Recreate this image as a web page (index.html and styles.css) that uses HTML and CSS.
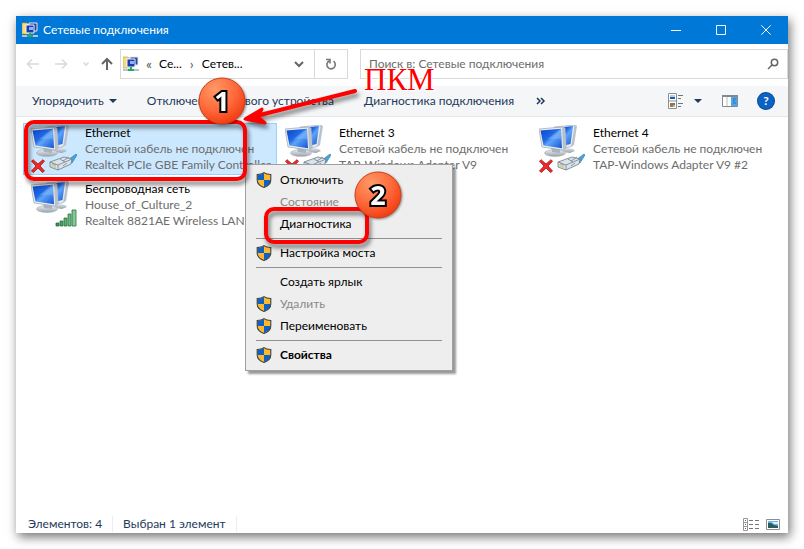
FILE: index.html
```html
<!DOCTYPE html>
<html lang="ru">
<head>
<meta charset="utf-8">
<title>Сетевые подключения</title>
<link rel="stylesheet" href="styles.css">
</head>
<body>
<svg class="defs" aria-hidden="true">
  <defs>
    <linearGradient id="screen" x1="0" y1="0" x2="1" y2="1"><stop offset="0" stop-color="#0a48c8"/><stop offset=".4" stop-color="#1f66e6"/><stop offset=".55" stop-color="#5ea4f8"/><stop offset="1" stop-color="#1553d6"/></linearGradient>
    <linearGradient id="metal" x1="0" y1="0" x2="0" y2="1"><stop offset="0" stop-color="#eef1f4"/><stop offset="1" stop-color="#98a2ac"/></linearGradient>
    <linearGradient id="bar" x1="0" y1="0" x2="1" y2="0"><stop offset="0" stop-color="#2f8a50"/><stop offset="1" stop-color="#8fd0a0"/></linearGradient>
    <radialGradient id="ball" cx=".35" cy=".25" r=".8"><stop offset="0" stop-color="#ff9a66"/><stop offset=".55" stop-color="#ff6a3c"/><stop offset="1" stop-color="#f03a10"/></radialGradient>
  </defs>
  <symbol id="i-net" viewBox="0 0 16 16">
    <path d="M0 1h5l1 1h3v10H0z" fill="#f5dc80" stroke="#b99a3c" stroke-width=".6"/>
    <path d="M7 1h8v8H7z" fill="#2546a8" stroke="#e9e9e9"/>
    <path d="M4 3h8v8H4z" fill="#1b3bb4" stroke="#f3f3f3"/>
    <path d="M7 5h4v3H7z" fill="#8fb4f5"/>
    <path d="M7 11h2v2h2v2H5v-2h2z" fill="#1fae62"/>
    <path d="M0 13h5v2H0zM11 13h5v2h-5z" fill="#b9c4c8"/>
  </symbol>
  <symbol id="i-pcs" viewBox="0 0 38 32">
    <path d="M24 22l10 2 2 2-5 2-7-1z" fill="url(#metal)"/>
    <path d="M15 2l21-2-2 20-3 2-9 1z" fill="#e6ebf0" stroke="#a4afb9" stroke-width=".7"/>
    <path d="M36 0l2 1-3 19-3 2z" fill="#b9c3cc"/>
    <path d="M17 3l17-2-2.500 18L23 21z" fill="url(#screen)"/>
    <ellipse cx="16" cy="28" rx="10.500" ry="3.400" fill="url(#metal)" stroke="#a6afb6" stroke-width=".6"/>
    <path d="M12 22l9 1v5l-8-1z" fill="#aab4bd"/>
    <path d="M0 4l23-2 3 1 1 20-3 2L3 22z" fill="#e9edf2" stroke="#9aa5af" stroke-width=".7"/>
    <path d="M23 2l3 1 1 20-3 2z" fill="#b7c1cb"/>
    <path d="M1.500 5.500L22 3.700l1 19.500L4.500 20.500z" fill="url(#screen)"/>
    <path d="M22 3.700l.6 10L9 14z" fill="#8fc1fa" opacity=".4"/>
  </symbol>
  <symbol id="i-x" viewBox="0 0 14 14">
    <path d="M2 .7L7 5l5-4.300 1.500 1.500L9 7l4.500 5-2 1.500L7 9l-4.500 4.500L.5 12 5 7 .5 2.200z" fill="#ee2b2b" stroke="#a90d0d" stroke-width=".8"/>
  </symbol>
  <symbol id="i-plug" viewBox="0 0 28 18">
    <path d="M19 7l8-6 1 1-5 8z" fill="#48a4dd" stroke="#2878ad" stroke-width=".6"/>
    <path d="M1 9l14-5 8 2-1 5-13 6-8-3z" fill="#dbe3ea" stroke="#6d7b87" stroke-width=".8"/>
    <path d="M1 9l8 3v5M9 12l14-6M4 10v4M6 11v4M11 6l5 3M14 8l6-4M14 13l4-3" fill="none" stroke="#71818f" stroke-width=".8"/>
    <path d="M2 11l5 2v2l-5-2z" fill="#e5cf8c"/>
  </symbol>
  <symbol id="i-signal" viewBox="0 0 22 18">
    <g fill="url(#bar)" stroke="#28733f" stroke-width=".8"><path d="M1 14h3v3H1zM5 12h3v5H5zM9 9h3v8H9zM13 5h3v12h-3zM17 1h4v16h-4z"/></g>
  </symbol>
  <symbol id="i-shield" viewBox="0 0 16 16">
    <path d="M8 .6C6 2.200 3.500 2.500 1.200 2.500V8c0 4 3.300 6.200 6.800 7.500C11.500 14.200 14.800 12 14.800 8V2.500C12.500 2.500 10 2.200 8 .6z" fill="#fcb92e"/>
    <path d="M8 1C6 2.500 3.500 2.800 1.500 2.800V8H8zM8 8h6.500c0 3.500-3 5.700-6.500 7z" fill="#0f62c4"/>
    <path d="M8 .6C6 2.200 3.500 2.500 1.200 2.500V8c0 4 3.300 6.200 6.800 7.500C11.500 14.200 14.800 12 14.800 8V2.500C12.500 2.500 10 2.200 8 .6z" fill="none" stroke="#3c434b" stroke-width="1.100"/>
  </symbol>
</svg>

<main class="window">
  <header class="titlebar">
    <svg class="icon16"><use href="#i-net"/></svg>
    <h1>Сетевые подключения</h1>
    <div class="caption">
      <button aria-label="Свернуть"><svg viewBox="0 0 10 10"><path d="M0 5.500h10"/></svg></button>
      <button aria-label="Развернуть"><svg viewBox="0 0 10 10"><path d="M.5.5h9v9h-9z"/></svg></button>
      <button aria-label="Закрыть"><svg viewBox="0 0 10 10"><path d="M.3.3l9.400 9.400M9.700.3L.3 9.700"/></svg></button>
    </div>
  </header>

  <nav class="navbar" aria-label="Адрес">
    <div class="arrows">
      <button disabled aria-label="Назад"><svg viewBox="0 0 14 12"><path d="M13 6H2M6 1.500L1.500 6 6 10.500"/></svg></button>
      <button disabled aria-label="Вперёд"><svg viewBox="0 0 14 12"><path d="M1 6h11M8 1.500L12.500 6 8 10.500"/></svg></button>
      <button class="recent" disabled aria-label="Журнал"><svg viewBox="0 0 8 6"><path d="M1.500 1.500L4 4l2.500-2.500"/></svg></button>
      <button class="up" aria-label="Вверх"><svg viewBox="0 0 14 14"><path d="M7 13V2M2 7l5-5 5 5"/></svg></button>
    </div>
    <div class="address">
      <svg class="icon16"><use href="#i-net"/></svg>
      <span class="chev">«</span>
      <a href="#">Се...</a>
      <span class="chev">›</span>
      <a href="#">Сетев...</a>
      <button class="drop" aria-label="Предыдущие расположения"><svg viewBox="0 0 10 8"><path d="M1 2l4 4 4-4"/></svg></button>
      <button class="refresh" aria-label="Обновить"><svg viewBox="0 0 12 12"><path d="M4 3a4.200 4.200 0 1 0 4.500.2M1 1.500h4v4"/></svg></button>
    </div>
    <label class="search">
      <input type="search" placeholder="Поиск в: Сетевые подключения" aria-label="Поиск">
      <svg viewBox="0 0 12 12"><circle cx="7.500" cy="4.500" r="3.200"/><path d="M5 7L1 11"/></svg>
    </label>
  </nav>

  <div class="toolbar">
    <button class="organize">Упорядочить <i class="caret"></i></button>
    <button>Отключение сетевого устройства</button>
    <button>Диагностика подключения</button>
    <button class="more" aria-label="Ещё"><svg viewBox="0 0 10 8"><path d="M1 1l3 3-3 3M5 1l3 3-3 3"/></svg></button>
    <div class="views">
      <button aria-label="Вид"><svg width="16" height="16" viewBox="0 0 16 16"><path d="M.5.5h8v15h-8zM.5 8h8" fill="#fff" stroke="#8b8f94"/><path d="M2 2h5v2H2z" fill="#a9d2f5"/><path d="M2 4h5v2H2z" fill="#245a9b"/><path d="M2 10h3v2H2z" fill="#d95535"/><path d="M5 10h2v2H5z" fill="#3e7bd6"/><path d="M2 12h3v2H2z" fill="#53a044"/><path d="M5 12h2v2H5z" fill="#e9b63a"/><path d="M10 2.500h5M10 5.500h3M10 10.500h5M10 13.500h3" stroke="#70757b"/></svg></button>
      <button class="viewmenu" aria-label="Другие виды"><i class="caret"></i></button>
      <button aria-label="Область просмотра"><svg width="16" height="12" viewBox="0 0 16 12"><path d="M.5.5h15v11H.5z" fill="#fff" stroke="#84898e"/><path d="M0 0h16v2H0z" fill="#84898e"/><path d="M5 2v9" stroke="#b8bcc0"/><path d="M9 2h6v9H9z" fill="#4fa5ec"/><path d="M11 4h3M11 6h2M11 8h3" stroke="#2476c4"/></svg></button>
      <button class="help" aria-label="Справка">?</button>
    </div>
  </div>

  <ul class="items">
    <li class="item selected">
      <div class="pic"><svg class="pcs"><use href="#i-pcs"/></svg><svg class="cross"><use href="#i-x"/></svg><svg class="plug"><use href="#i-plug"/></svg></div>
      <div class="info"><b>Ethernet</b><span>Сетевой кабель не подключен</span><span>Realtek PCIe GBE Family Controller</span></div>
    </li>
    <li class="item">
      <div class="pic"><svg class="pcs"><use href="#i-pcs"/></svg><svg class="cross"><use href="#i-x"/></svg><svg class="plug"><use href="#i-plug"/></svg></div>
      <div class="info"><b>Ethernet 3</b><span>Сетевой кабель не подключен</span><span>TAP-Windows Adapter V9</span></div>
    </li>
    <li class="item">
      <div class="pic"><svg class="pcs"><use href="#i-pcs"/></svg><svg class="cross"><use href="#i-x"/></svg><svg class="plug"><use href="#i-plug"/></svg></div>
      <div class="info"><b>Ethernet 4</b><span>Сетевой кабель не подключен</span><span>TAP-Windows Adapter V9 #2</span></div>
    </li>
    <li class="item">
      <div class="pic"><svg class="pcs"><use href="#i-pcs"/></svg><svg class="signal"><use href="#i-signal"/></svg></div>
      <div class="info"><b>Беспроводная сеть</b><span>House_of_Culture_2</span><span>Realtek 8821AE Wireless LAN 8</span></div>
    </li>
  </ul>

  <footer class="status">
    <span>Элементов: 4</span>
    <span>Выбран 1 элемент</span>
    <div class="modes">
      <button aria-label="Таблица"><svg width="16" height="13" viewBox="0 0 16 13"><path d="M.5.5h4v12h-4zM.5 4.500h4M.5 8.500h4" fill="#fff" stroke="#979797"/><path d="M2 2h1v1H2z" fill="#666"/><path d="M2 6h1v1H2z" fill="#27c"/><path d="M2 10h1v1H2z" fill="#d22"/><path d="M6 2.500h4M12 2.500h4M6 6.500h4M12 6.500h4M6 10.500h4M12 10.500h4" stroke="#777"/></svg></button>
      <button aria-label="Крупные значки"><svg width="14" height="11" viewBox="0 0 14 11"><path d="M.5.5h13v10H.5z" fill="#fff" stroke="#8d8d8d"/><path d="M2 2h10v7H2z" fill="#6db3f5"/><path d="M2 4l3 0 3 2 4 1v2H2z" fill="#2c5c58"/><path d="M6 3h6v2H8z" fill="#d9edff"/></svg></button>
    </div>
  </footer>

  <div class="menu" role="menu">
    <button role="menuitem"><svg class="icon16"><use href="#i-shield"/></svg>Отключить</button>
    <button role="menuitem" disabled>Состояние</button>
    <button role="menuitem">Диагностика</button>
    <hr>
    <button role="menuitem"><svg class="icon16"><use href="#i-shield"/></svg>Настройка моста</button>
    <hr>
    <button role="menuitem">Создать ярлык</button>
    <button role="menuitem" disabled><svg class="icon16"><use href="#i-shield"/></svg>Удалить</button>
    <button role="menuitem"><svg class="icon16"><use href="#i-shield"/></svg>Переименовать</button>
    <hr>
    <button role="menuitem" class="default"><svg class="icon16"><use href="#i-shield"/></svg>Свойства</button>
  </div>

  <svg class="marks" viewBox="0 0 460 260" role="img" aria-label="Шаги 1 и 2">
    <g class="red">
      <rect x="10" y="106" width="219" height="57" rx="8"/>
      <rect x="250" y="193" width="101" height="33" rx="8"/>
      <path d="M339 75L240 100"/>
      <path class="tip" d="M229 103l17-10-4 8 7 6z"/>
    </g>
    <g class="step">
      <circle cx="206" cy="85" r="23"/><text x="206" y="95">1</text>
      <circle cx="362" cy="179" r="23"/><text x="362" y="189">2</text>
    </g>
    <text class="rmb" x="348" y="74">ПКМ</text>
  </svg>
</main>
</body>
</html>
```

FILE: styles.css
```css
* { box-sizing: border-box; }
body {
  margin: 0;
  padding: 16px;
  height: 100vh;
  background: #fff;
  color: #000;
  font: 12px/16px Lato, "Noto Sans", sans-serif;
}
button { border: 0; padding: 0; background: none; font: inherit; color: inherit; }
svg { display: block; flex: none; }
.defs { position: absolute; width: 0; height: 0; }
.icon16 { width: 16px; height: 16px; }

.window {
  position: relative;
  display: flex;
  flex-direction: column;
  height: 100%;
  background: #fff;
  box-shadow: 2px 4px 10px rgba(0, 0, 0, .55);
}

.titlebar { display: flex; align-items: center; height: 28px; padding-left: 6px; background: #0078d7; color: #fff; flex: none; }
.titlebar h1 { margin: 0 0 0 5px; font-size: 12px; font-weight: 400; }
.caption { display: flex; margin-left: auto; }
.caption button { display: grid; place-items: center; width: 45px; height: 24px; }
.caption svg { width: 10px; height: 10px; fill: none; stroke: #fff; }

.navbar { display: flex; align-items: center; height: 42px; padding: 0 0 2px 10px; flex: none; }
.arrows { display: flex; align-items: center; width: 94px; gap: 14px; }
.arrows svg { width: 14px; height: 12px; fill: none; stroke: #666; stroke-width: 2; }
.arrows button:disabled svg { stroke: #dadada; stroke-width: 1.600; }
.arrows .recent svg { width: 8px; height: 6px; }
.arrows .up svg { height: 14px; }
.arrows .up { margin-left: -4px; }
.address { display: flex; align-items: center; width: 228px; height: 30px; padding-left: 2px; border: 1px solid #d9d9d9; flex: none; }
.address a { color: #000; text-decoration: none; }
.chev { width: 20px; text-align: center; color: #555; font-size: 14px; }
.drop { margin-left: auto; width: 30px; display: grid; place-items: center; }
.drop svg { width: 10px; height: 8px; fill: none; stroke: #666; stroke-width: 2; }
.refresh { width: 33px; height: 28px; border-left: 1px solid #d9d9d9; display: grid; place-items: center; }
.refresh svg { width: 12px; height: 12px; fill: none; stroke: #777; stroke-width: 1.600; }
.search { display: flex; align-items: center; flex: 1; height: 30px; margin-left: 12px; padding: 0 8px; border: 1px solid #d9d9d9; }
.search input { flex: 1; min-width: 0; padding: 0; border: 0; outline: 0; background: none; font: inherit; }
.search input::placeholder { color: #6d6d6d; opacity: 1; }
.search svg { width: 12px; height: 12px; fill: none; stroke: #666; stroke-width: 1.500; }

.toolbar { display: flex; align-items: center; height: 31px; padding: 0 14px 0 16px; background: #f5f6f7; border-bottom: 1px solid #e4e6e8; color: #1e395b; white-space: nowrap; flex: none; gap: 30px; }
.organize { display: flex; align-items: center; gap: 5px; }
.caret { border: 4px solid transparent; border-top-color: #1e395b; border-bottom: 0; }
.more { margin-left: -8px; }
.more svg { width: 10px; height: 8px; fill: none; stroke: #1e395b; stroke-width: 1.500; }
.views { display: flex; align-items: center; margin-left: auto; gap: 20px; }
.viewmenu { display: flex; margin-left: -10px; }
.help { width: 16px; height: 16px; border-radius: 50%; background: #0b63c4; box-shadow: 0 0 0 1px #0a4a93; color: #fff; font-weight: 700; line-height: 16px; }

.items { display: grid; grid-template-columns: repeat(auto-fill, 254px); grid-auto-rows: 52px; row-gap: 4px; margin: 0; padding: 6px 0 0 7px; list-style: none; flex: 1; align-content: start; }
.item { display: flex; gap: 8px; padding: 1px 2px 0 7px; border: 1px solid transparent; }
.selected { background: #cce8ff; border-color: #99d1ff; }
.pic { position: relative; width: 46px; height: 48px; flex: none; }
.pcs { width: 38px; height: 32px; }
.cross { position: absolute; left: 0; bottom: 0; width: 14px; height: 14px; }
.plug { position: absolute; right: 0; bottom: 2px; width: 28px; height: 18px; }
.signal { position: absolute; right: 0; bottom: 2px; width: 22px; height: 18px; }
.info { display: flex; flex-direction: column; min-width: 0; color: #6d6d6d; white-space: nowrap; }
.info b { color: #000; font-weight: 400; }

.status { display: flex; align-items: center; height: 18px; padding: 0 8px 0 12px; color: #1e395b; flex: none; }
.status span { padding-right: 10px; margin-right: 10px; border-right: 1px solid #ededed; }
.modes { display: flex; align-items: center; gap: 7px; margin-left: auto; }

.menu { position: absolute; left: 229px; top: 148px; width: 208px; padding: 4px 0; background: #eee; border: 1px solid #a0a0a0; box-shadow: 3px 3px 2px rgba(0, 0, 0, .4); }
.menu button { display: flex; align-items: center; width: 100%; height: 22px; padding-left: 34px; text-align: left; }
.menu button:disabled { color: #888; }
.menu .icon16 { margin-left: -24px; margin-right: 8px; }
.menu .default { font-weight: 700; }
.menu hr { margin: 3px 10px; border: 0; border-top: 1px solid #919191; }

.marks { position: absolute; left: 0; top: 0; width: 460px; height: 260px; pointer-events: none; }
.red { fill: none; stroke: #f00; stroke-width: 4; stroke-linecap: round; filter: drop-shadow(2px 4px 2px rgba(0, 0, 0, .5)); }
.tip { fill: #f00; stroke-width: 3; stroke-linejoin: round; }
.step { filter: drop-shadow(1px 1px 1px rgba(0, 0, 0, .4)); }
.step circle { fill: url(#ball); stroke: #c8401a; stroke-width: 1; }
.step text { fill: #fff; stroke: #000; stroke-width: 4; paint-order: stroke; font: 700 27px "Open Sans", sans-serif; text-anchor: middle; }
.rmb { fill: #f00; stroke: #fff; stroke-width: 2; paint-order: stroke; font: 31px "Liberation Serif", serif; }
```
